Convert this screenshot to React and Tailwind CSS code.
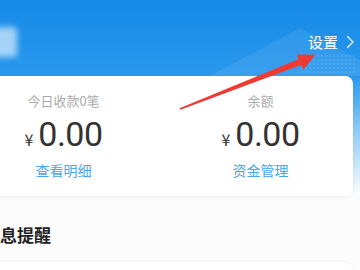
import React from 'react';

const cjk = { fontFamily: '"Noto Sans CJK SC", "Noto Sans", sans-serif' };
const num = { fontFamily: 'Roboto, "Liberation Sans", sans-serif' };

const Stat = ({ label, link }) => (
    <div className="flex flex-col items-center pt-[16px]">
        <div className="text-[13px] leading-[18px] text-[#ababab]" style={cjk}>{label}</div>
        <div className="mt-[4px] flex items-baseline gap-[5px] text-[#333]" style={num}>
            <span className="text-[16px] leading-none" style={cjk}>¥</span>
            <span className="text-[34px] leading-[40px] tracking-[-0.5px]">0.00</span>
        </div>
        <div className="mt-[6px] text-[14px] leading-[20px] text-[#4aa6ea]" style={cjk}>{link}</div>
    </div>
);

const App = () => {
    return (
        <div className="relative w-[360px] h-[270px] overflow-hidden bg-[#fcfcfc]">
            <div className="ml-[-48px] w-[408px]">
                {/* blue header fades into the page */}
                <div className="bg-[linear-gradient(180deg,#168ae6_0px,#2a98ee_76px,#8ccaf6_130px,#ffffff_196px,#fcfcfc_200px)]">
                    <div className="relative h-[76px] flex items-center justify-between pt-[8px] pl-[35px] pr-[5px]">
                        <svg className="absolute right-0 top-0" width="150" height="76" viewBox="0 0 150 76">
                            <polygon points="0,76 90,28 150,60 150,76" fill="#ffffff" opacity="0.08" />
                            {Array.from({ length: 5 }).map((_, r) =>
                                Array.from({ length: 14 }).map((_, c) => (
                                    <circle key={`${r}-${c}`} cx={92 + c * 4} cy={56 + r * 4} r="0.8" fill="#ffffff" opacity="0.25" />
                                ))
                            )}
                        </svg>
                        <div className="w-[30px] h-[30px] rounded-[4px] bg-white/60 blur-[3px]" />
                        <div className="relative flex items-center gap-[8px] text-white">
                            <span className="text-[15px] leading-[20px]" style={cjk}>设置</span>
                            <svg width="9" height="14" viewBox="0 0 9 14" fill="none">
                                <path d="M1.5 1.5 L7 7 L1.5 12.5" stroke="#ffffff" strokeWidth="1.3" strokeLinecap="round" strokeLinejoin="round" opacity="0.9" />
                            </svg>
                        </div>
                    </div>

                    <div className="mx-[7px] h-[120px] rounded-[8px] bg-white shadow-[0_1px_4px_rgba(0,0,0,0.06)] pl-[6px]">
                        <div className="grid grid-cols-[197px_197px]">
                            <Stat label="今日收款0笔" link="查看明细" />
                            <Stat label="余额" link="资金管理" />
                        </div>
                    </div>
                </div>

                <div className="mt-[27px] pl-[31px] text-[17px] leading-[24px] font-bold text-[#222]" style={cjk}>
                    消息提醒
                </div>

                <div className="mt-[15px] mx-[7px] h-[60px] rounded-[8px] bg-white shadow-[0_0_4px_rgba(0,0,0,0.06)]" />
            </div>

            {/* red annotation arrow */}
            <svg className="absolute left-0 top-0 pointer-events-none" width="360" height="270" viewBox="0 0 360 270">
                <polygon points="179.6,108.2 180.4,109.8 301.1,64.9 298.9,59.1" fill="#ef3a33" />
                <polygon points="296.5,54.5 303.2,69.8 315.5,54.8" fill="#ef3a33" />
            </svg>
        </div>
    );
};

export default App;
